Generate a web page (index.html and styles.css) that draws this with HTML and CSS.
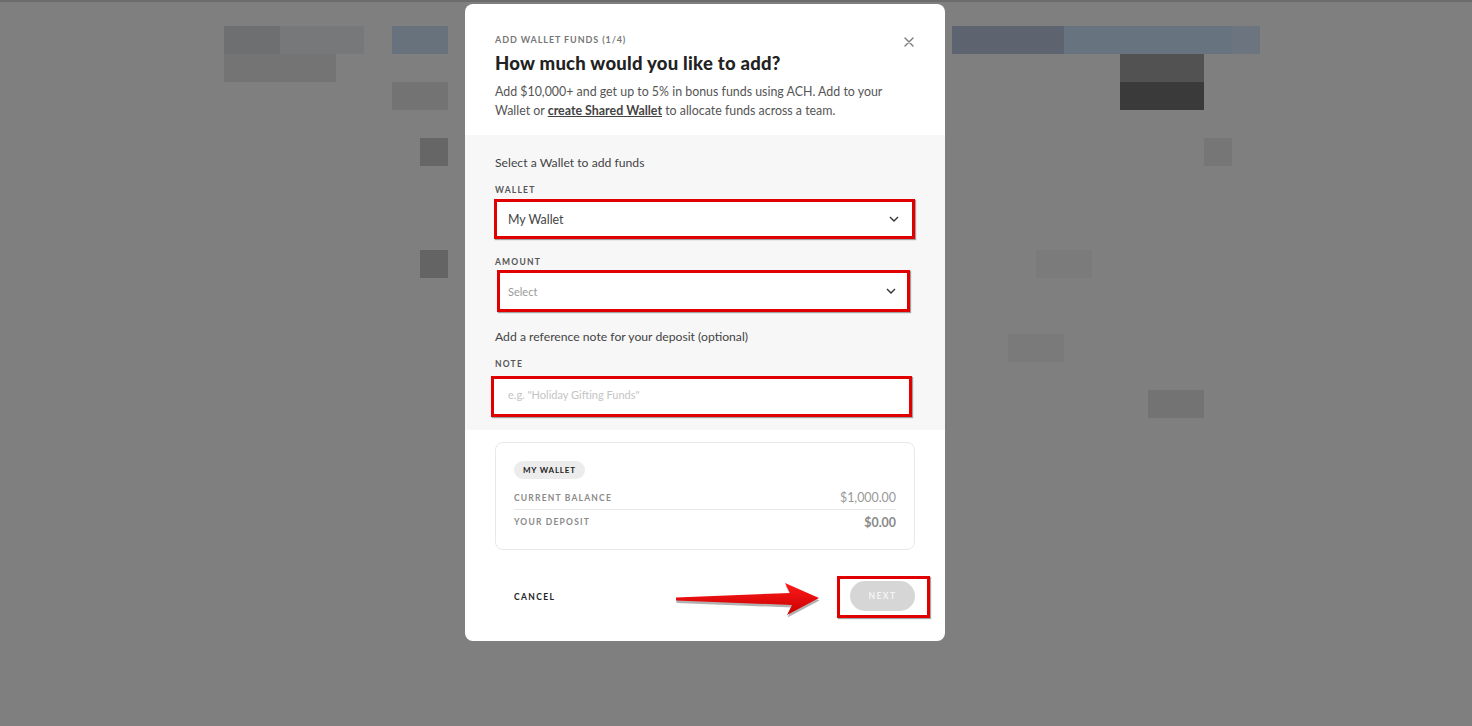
FILE: index.html
```html
<!DOCTYPE html>
<html lang="en">
<head>
    <meta charset="UTF-8">
    <meta name="viewport" content="width=device-width, initial-scale=1.0">
    <title>Add Wallet Funds</title>
    <link rel="stylesheet" href="styles.css">
</head>
<body>
    <!-- blurred page behind the dialog -->
    <div class="backdrop">
        <div class="blk b1"></div>
        <div class="blk b2"></div>
        <div class="blk b3"></div>
        <div class="blk b4"></div>
        <div class="blk b5"></div>
        <div class="blk b6"></div>
        <div class="blk b7"></div>
        <div class="blk b8"></div>
        <div class="blk b9"></div>
        <div class="blk b10"></div>
        <div class="blk b11"></div>
        <div class="blk b12"></div>
        <div class="blk b13"></div>
        <div class="blk b14"></div>
        <div class="blk b15"></div>
        <div class="blk b16"></div>
    </div>

    <!-- Dialog -->
    <div class="modal">
        <div class="modal-head">
            <div class="eyebrow">ADD WALLET FUNDS (1/4)</div>
            <h1 class="title">How much would you like to add?</h1>
            <p class="desc">Add $10,000+ and get up to 5% in bonus funds using ACH. Add to your<br>Wallet or <a href="#">create Shared Wallet</a> to allocate funds across a team.</p>
            <button class="close" aria-label="Close">
                <svg width="10" height="10" viewBox="0 0 10 10"><path d="M1 1 L9 9 M9 1 L1 9" stroke="#7a7a7a" stroke-width="1.4" stroke-linecap="round"/></svg>
            </button>
        </div>

        <div class="modal-body">
            <div class="hint">Select a Wallet to add funds</div>
            <div class="label">WALLET</div>
            <div class="mark mark-wallet">
                <div class="field">
                    <span>My Wallet</span>
                    <svg class="chev" width="10" height="6" viewBox="0 0 10 6"><path d="M1 1 L5 5 L9 1" fill="none" stroke="#333" stroke-width="1.4"/></svg>
                </div>
            </div>

            <div class="label label-amount">AMOUNT</div>
            <div class="mark mark-amount">
                <div class="field field-amount">
                    <span class="ph">Select</span>
                    <svg class="chev" width="10" height="6" viewBox="0 0 10 6"><path d="M1 1 L5 5 L9 1" fill="none" stroke="#333" stroke-width="1.4"/></svg>
                </div>
            </div>

            <div class="hint hint-note">Add a reference note for your deposit (optional)</div>
            <div class="label label-note">NOTE</div>
            <div class="mark mark-note">
                <div class="field field-note">
                    <span class="ph ph-light">e.g. "Holiday Gifting Funds"</span>
                </div>
            </div>
        </div>

        <div class="summary">
            <div class="pill">MY WALLET</div>
            <div class="sum-row">
                <span class="sum-key">CURRENT BALANCE</span>
                <span class="sum-val">$1,000.00</span>
            </div>
            <div class="sum-row sum-total">
                <span class="sum-key">YOUR DEPOSIT</span>
                <span class="sum-val">$0.00</span>
            </div>
        </div>

        <div class="modal-foot">
            <button class="cancel">CANCEL</button>
            <svg class="arrow" width="155" height="40" viewBox="0 0 155 40">
                <defs>
                    <linearGradient id="ag" x1="0" y1="0" x2="0" y2="1">
                        <stop offset="0" stop-color="#ff1a1a"/>
                        <stop offset="1" stop-color="#c80000"/>
                    </linearGradient>
                </defs>
                <polygon points="6,18.5 120,14 115,4 149,19 117,36 122,26 6,21.5" fill="#555" opacity="0.45" transform="translate(0.5,1.5)"/>
                <polygon points="6,17.5 120,13 115,3 149,18 117,35 122,25 6,20.5" fill="url(#ag)"/>
            </svg>
            <div class="mark mark-next">
                <button class="next">NEXT</button>
            </div>
        </div>
    </div>
</body>
</html>
```

FILE: styles.css
```css
/* page */
* {
    box-sizing: border-box;
}

body {
    margin: 0;
    height: 726px;
    overflow: hidden;
    background-color: #7f7f7f;
    font-family: Lato, "Open Sans", sans-serif;
}

/* pixelated page behind the overlay */
.backdrop {
    display: grid;
    grid-template-columns: repeat(53, 28px);
    grid-template-rows: 24px repeat(26, 28px);
    border-top: 2px solid #6c6c6c;
}

.blk { background-color: #777; }
.b1 { grid-column: 9 / 11; grid-row: 2; background-color: #6e6f70; }
.b2 { grid-column: 11 / 14; grid-row: 2; background-color: #76787a; }
.b3 { grid-column: 9 / 13; grid-row: 3; background-color: #747474; }
.b4 { grid-column: 15 / 17; grid-row: 2; background-color: #67727d; }
.b5 { grid-column: 15 / 17; grid-row: 4; background-color: #737373; }
.b6 { grid-column: 16; grid-row: 6; background-color: #666; }
.b7 { grid-column: 16; grid-row: 10; background-color: #646464; }
.b8 { grid-column: 35 / 39; grid-row: 2; background-color: #5d6470; }
.b9 { grid-column: 39 / 45; grid-row: 2; background-color: #67737f; }
.b10 { grid-column: 45; grid-row: 2; background-color: #6c7480; }
.b11 { grid-column: 41 / 44; grid-row: 3; background-color: #525252; }
.b12 { grid-column: 41 / 44; grid-row: 4; background-color: #3a3a3a; }
.b13 { grid-column: 44; grid-row: 6; background-color: #767676; }
.b14 { grid-column: 42 / 44; grid-row: 15; background-color: #737373; }
.b15 { grid-column: 38 / 40; grid-row: 10; background-color: #7b7b7b; }
.b16 { grid-column: 37 / 39; grid-row: 13; background-color: #7a7a7a; }

/* dialog */
.modal {
    position: absolute;
    left: 465px;
    top: 4px;
    width: 480px;
    height: 637px;
    background-color: #fff;
    border-radius: 8px;
    overflow: hidden;
}

.modal-head {
    position: relative;
    padding: 30px 30px 15px;
}

.eyebrow {
    font-size: 9px;
    line-height: 12px;
    font-weight: bold;
    letter-spacing: 0.9px;
    color: #777;
}

.title {
    margin: 5px 0 0;
    font-size: 18.5px;
    line-height: 24px;
    font-weight: 900;
    letter-spacing: 0.25px;
    color: #222;
}

.desc {
    margin: 7px 0 0;
    font-size: 12.4px;
    line-height: 19px;
    color: #555;
}

.desc a {
    color: #444;
    font-weight: bold;
}

.close {
    position: absolute;
    right: 31px;
    top: 33px;
    padding: 0;
    border: none;
    background: none;
    line-height: 0;
}

.modal-body {
    background-color: #f7f7f7;
    padding: 19px 30px 13px;
}

.hint {
    font-size: 12.2px;
    line-height: 18px;
    color: #444;
}

.hint-note {
    margin-top: 16px;
}

.label {
    margin-top: 12px;
    font-size: 8.5px;
    line-height: 12px;
    font-weight: bold;
    letter-spacing: 1.2px;
    color: #555;
}

.label-amount {
    margin-top: 17px;
}

/* red annotation frames */
.mark {
    border: 3px solid #e00000;
    box-shadow: 1px 1px 1px rgba(0, 0, 0, 0.35);
}

.mark-wallet {
    margin: 3px 0 0 -1px;
    width: 421px;
    height: 40px;
}

.mark-amount {
    margin: 2px 0 0 2px;
    width: 413px;
    height: 42px;
}

.mark-note {
    margin: 6px 0 0 -4px;
    width: 421px;
    height: 41px;
}

.field {
    display: flex;
    align-items: center;
    justify-content: space-between;
    height: 100%;
    padding: 0 13px 0 11px;
    background-color: #fff;
    font-size: 12.4px;
    color: #444;
}

.field-amount {
    padding: 0 11px 0 8px;
}

.field-note {
    padding: 0 14px 4px;
}

.ph {
    font-size: 11px;
    color: #9a9a9a;
}

.ph-light {
    color: #c4c4c4;
}

/* wallet summary card */
.summary {
    margin: 12px 30px 0;
    height: 108px;
    padding: 18px 18px 0;
    border: 1px solid #e8e8e8;
    border-radius: 8px;
}

.pill {
    width: max-content;
    height: 18px;
    padding: 0 9px;
    line-height: 18px;
    border-radius: 9px;
    background-color: #ececec;
    font-size: 8px;
    font-weight: bold;
    letter-spacing: 0.8px;
    color: #222;
}

.sum-row {
    display: flex;
    align-items: center;
    justify-content: space-between;
    height: 24px;
    margin-top: 7px;
    border-bottom: 1px solid #e8e8e8;
}

.sum-total {
    margin-top: 0;
    border-bottom: none;
}

.sum-key {
    font-size: 8.5px;
    font-weight: bold;
    letter-spacing: 1.2px;
    color: #8a8a8a;
}

.sum-val {
    font-size: 12.4px;
    color: #999;
}

.sum-total .sum-val {
    font-weight: bold;
    color: #8a8a8a;
}

/* footer */
.modal-foot {
    position: relative;
    display: flex;
    align-items: center;
    justify-content: space-between;
    padding: 26px 15px 0 49px;
}

.cancel {
    padding: 0;
    border: none;
    background: none;
    font-family: inherit;
    font-size: 8.5px;
    font-weight: bold;
    letter-spacing: 1.4px;
    color: #222;
}

.arrow {
    position: absolute;
    left: 205px;
    top: 30px;
}

.mark-next {
    padding: 2px 12px 4px 10px;
}

.next {
    display: block;
    width: 65px;
    height: 30px;
    border: none;
    border-radius: 15px;
    background-color: #d6d6d6;
    font-family: inherit;
    font-size: 8.5px;
    font-weight: bold;
    letter-spacing: 1.4px;
    color: #f4f4f4;
}
```
